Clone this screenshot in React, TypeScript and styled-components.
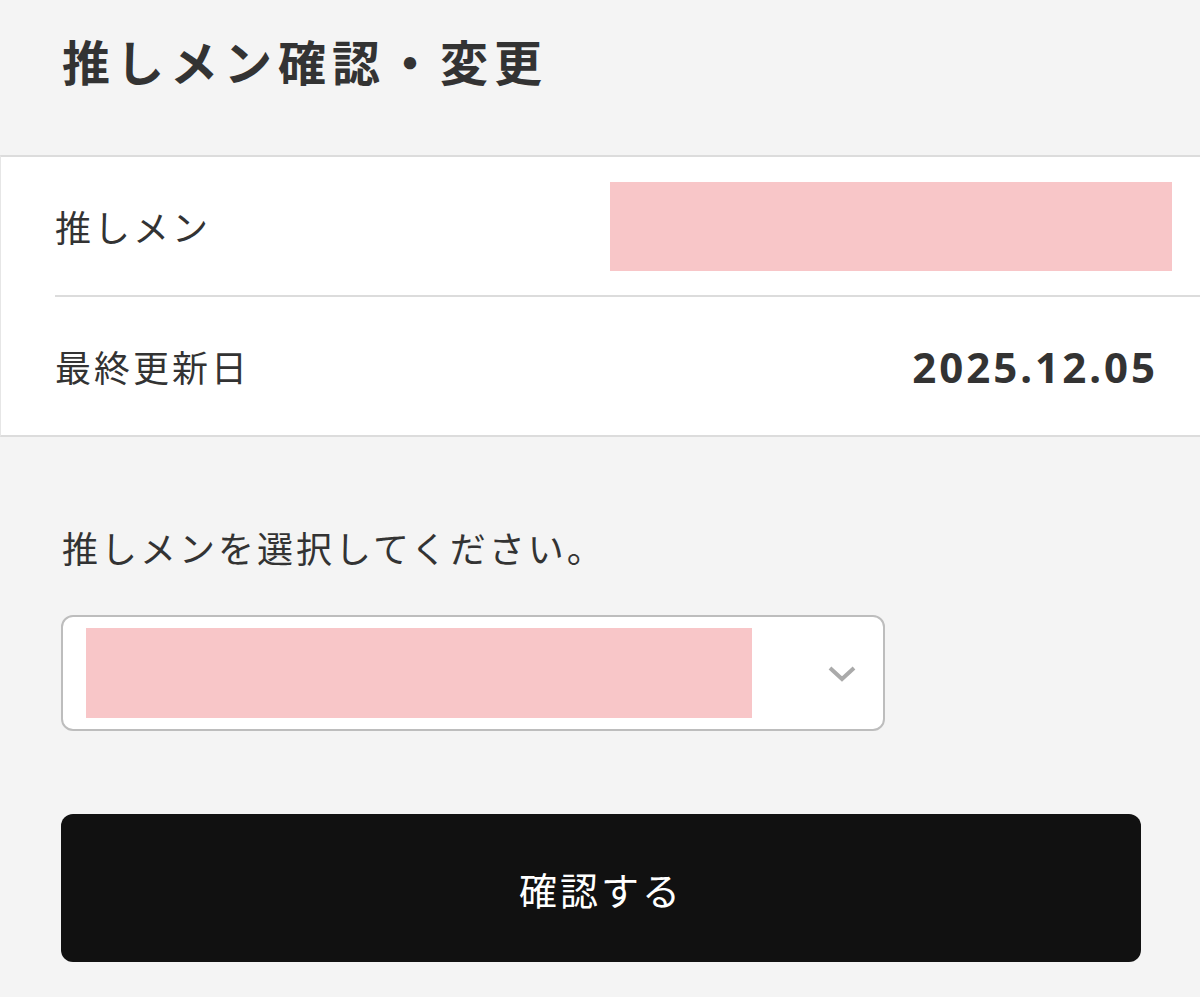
import React from 'react';
import styled, { createGlobalStyle } from 'styled-components';

const GlobalStyle = createGlobalStyle`
    html, body {
        margin: 0;
        padding: 0;
        background: #f4f4f4;
        font-family: "Noto Sans CJK JP", "Noto Sans", sans-serif;
        color: #333;
    }
`;

const Page = styled.div`
    width: 1200px;
    min-height: 997px;
    background: #f4f4f4;
`;

const Header = styled.div`
    height: 155px;
    display: flex;
    align-items: center;
    padding-left: 62px;
    box-sizing: border-box;
`;

const Title = styled.h1`
    margin: 0;
    margin-top: -36px;
    font-size: 48px;
    font-weight: 700;
    letter-spacing: 6px;
    color: #333;
`;

const Card = styled.div`
    background: #fff;
    border-top: 2px solid #dcdcdc;
    border-bottom: 2px solid #dcdcdc;
    border-left: 1px solid #e6e6e6;
`;

const Row = styled.div<{ divider?: boolean }>`
    height: 138px;
    margin-left: 54px;
    padding-right: 28px;
    display: flex;
    align-items: center;
    justify-content: space-between;
    border-bottom: ${p => (p.divider ? '2px solid #dcdcdc' : 'none')};
`;

const Label = styled.span`
    font-size: 36px;
    letter-spacing: 3px;
    color: #333;
`;

const DateValue = styled.span`
    font-family: "Noto Sans", "Liberation Sans", sans-serif;
    font-size: 42px;
    font-weight: 700;
    letter-spacing: 3px;
    color: #333;
    margin-right: 14px;
`;

const Redacted = styled.div<{ w: number; h: number }>`
    width: ${p => p.w}px;
    height: ${p => p.h}px;
    background: #f8c6c8;
`;

const Body = styled.div`
    padding: 0 60px 0 61px;
    display: flex;
    flex-direction: column;
`;

const Prompt = styled.p`
    margin: 88px 0 0 1px;
    font-size: 36px;
    letter-spacing: 3px;
    line-height: 44px;
    color: #333;
`;

const Select = styled.div`
    margin-top: 46px;
    width: 824px;
    height: 116px;
    box-sizing: border-box;
    border: 2px solid #bdbdbd;
    border-radius: 12px;
    background: #fff;
    display: flex;
    align-items: center;
    justify-content: space-between;
    padding: 0 26px 0 23px;
`;

const Button = styled.button`
    margin-top: 83px;
    height: 148px;
    width: 1080px;
    border: none;
    border-radius: 12px;
    background: #111;
    color: #fff;
    font-family: "Noto Sans CJK JP", sans-serif;
    font-size: 38px;
    letter-spacing: 3px;
    cursor: pointer;
`;

const Chevron = () => (
    <svg width="30" height="20" viewBox="0 0 30 20">
        <polyline points="3,5 15,16 27,5" fill="none" stroke="#aaa" strokeWidth="4" />
    </svg>
);

export default function App() {
    return (
        <Page>
            <GlobalStyle />
            <Header>
                <Title>推しメン確認・変更</Title>
            </Header>
            <Card>
                <Row divider>
                    <Label>推しメン</Label>
                    <Redacted w={562} h={89} />
                </Row>
                <Row>
                    <Label>最終更新日</Label>
                    <DateValue>2025.12.05</DateValue>
                </Row>
            </Card>
            <Body>
                <Prompt>推しメンを選択してください。</Prompt>
                <Select>
                    <Redacted w={666} h={90} />
                    <Chevron />
                </Select>
                <Button>確認する</Button>
            </Body>
        </Page>
    );
}
